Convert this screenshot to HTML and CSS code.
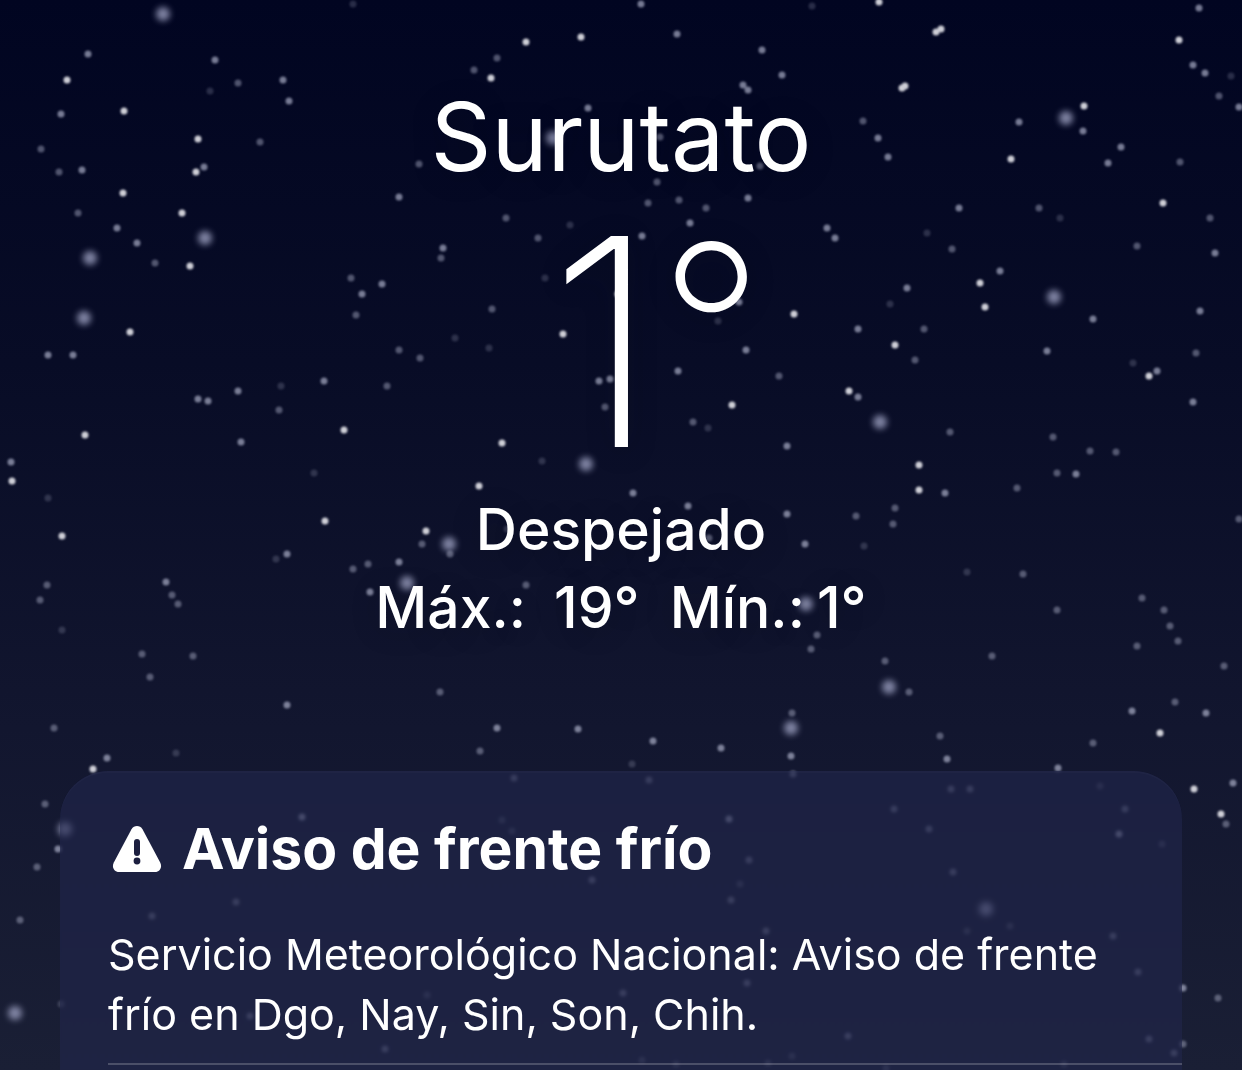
FILE: index.html
```
<!DOCTYPE html>
<html lang="es">
<head>
  <meta charset="UTF-8" />
  <meta name="viewport" content="width=device-width, initial-scale=1.0" />
  <title>Surutato</title>
  <link rel="stylesheet" href="styles.css">
</head>
<body>
  <!-- Cielo estrellado: cada "h0" es una estrella -->
  <svg class="sky" viewBox="0 0 1242 1070" preserveAspectRatio="xMidYMin slice" aria-hidden="true">
    <path class="star glow" d="M163 14h0M205 238h0M90 258h0M84 318h0M553 138h0M1066 118h0M1054 297h0M407 583h0M586 464h0M449 544h0M806 604h0M880 422h0M889 687h0M65 829h0M15 1013h0M791 728h0M986 909h0" />
    <path class="star bright" d="M67 80h0M124 111h0M198 139h0M196 172h0M123 193h0M182 213h0M190 266h0M130 332h0M526 42h0M581 37h0M491 78h0M563 334h0M794 314h0M618 294h0M879 2h0M936 32h0M941 29h0M902 88h0M905 86h0M1084 106h0M1179 40h0M1011 159h0M980 283h0M985 307h0M895 345h0M1163 203h0M344 430h0M12 481h0M62 536h0M325 521h0M85 435h0M732 405h0M502 443h0M479 486h0M426 531h0M849 391h0M919 465h0M919 490h0M1149 376h0M93 769h0M1194 789h0M1221 814h0M1160 733h0" />
    <path class="star medium" d="M88 54h0M215 60h0M283 80h0M289 101h0M61 114h0M204 167h0M137 243h0M362 294h0M399 197h0M48 355h0M73 355h0M82 170h0M382 284h0M117 228h0M641 4h0M677 34h0M762 50h0M782 75h0M743 85h0M748 90h0M588 108h0M748 198h0M642 236h0M443 248h0M690 223h0M746 350h0M827 228h0M739 302h0M1199 8h0M1193 65h0M1205 73h0M878 138h0M888 157h0M1019 122h0M1083 131h0M1121 147h0M1108 163h0M959 208h0M1000 271h0M1215 253h0M1093 319h0M1047 351h0M1200 311h0M907 288h0M858 329h0M1239 107h0M835 238h0M198 399h0M208 401h0M238 391h0M241 442h0M11 462h0M399 562h0M324 381h0M287 554h0M370 592h0M287 705h0M166 582h0M610 379h0M599 381h0M678 371h0M787 446h0M787 514h0M805 544h0M688 506h0M633 493h0M858 397h0M1157 371h0M1193 402h0M1076 474h0M945 493h0M1132 711h0M1206 713h0M107 758h0M58 849h0M302 817h0M497 728h0M578 729h0M721 748h0M653 741h0M791 756h0M729 819h0M1233 783h0M1183 988h0M1119 834h0M1058 768h0M947 759h0" />
    <path class="star dim" d="M59 172h0M78 213h0M155 263h0M351 278h0M356 315h0M399 350h0M260 142h0M41 149h0M238 83h0M474 70h0M497 58h0M660 137h0M657 182h0M648 203h0M679 200h0M706 208h0M506 218h0M538 238h0M441 258h0M492 309h0M420 358h0M419 164h0M760 166h0M863 121h0M1180 162h0M1039 208h0M1210 218h0M1137 246h0M952 249h0M924 329h0M915 360h0M1196 353h0M1219 96h0M387 386h0M279 410h0M47 585h0M40 600h0M172 595h0M178 604h0M142 654h0M193 656h0M150 677h0M368 564h0M353 569h0M605 407h0M779 376h0M693 422h0M422 544h0M450 554h0M526 585h0M440 692h0M817 635h0M811 649h0M792 713h0M709 538h0M950 432h0M1053 437h0M1090 451h0M1116 452h0M1057 473h0M1017 488h0M1239 519h0M895 508h0M856 516h0M893 524h0M1023 574h0M1057 610h0M1142 598h0M1164 610h0M1170 626h0M1178 641h0M1137 646h0M885 661h0M992 656h0M909 692h0M1175 702h0M1224 666h0M54 728h0M45 804h0M37 867h0M20 920h0M236 902h0M152 916h0M385 1049h0M250 1016h0M480 751h0M793 774h0M649 780h0M514 778h0M592 880h0M749 860h0M731 900h0M747 983h0M766 931h0M623 993h0M940 736h0M1093 743h0M894 809h0M929 829h0M970 789h0M951 789h0M1226 824h0M1218 998h0M953 872h0M1113 936h0M1138 972h0M848 1036h0M1174 1053h0M1149 1039h0M1183 1044h0M1125 809h0" />
    <path class="star faint" d="M353 4h0M210 91h0M812 6h0M570 225h0M545 278h0M718 321h0M455 338h0M489 348h0M1231 76h0M1060 218h0M927 233h0M890 304h0M281 386h0M314 473h0M48 498h0M276 559h0M62 630h0M708 428h0M542 461h0M507 529h0M1133 363h0M864 546h0M967 572h0M176 753h0M61 1004h0M377 837h0M632 764h0M502 820h0M512 831h0M740 884h0M642 1060h0M676 1064h0M792 1056h0M768 1063h0M427 995h0M1010 926h0M1100 786h0M1162 844h0M967 931h0M1064 1064h0M886 1068h0" />
  </svg>

  <main class="weather">
    <header class="summary">
      <h1 class="city">Surutato</h1>
      <div class="temperature">1<span class="degree">°</span></div>
      <div class="condition">Despejado</div>
      <div class="range">
        <span class="range-item high"><span>Máx.:</span> <span>19°</span></span>
        <span class="range-item low"><span>Mín.:</span> <span>1°</span></span>
      </div>
    </header>

    <section class="alert">
      <h2 class="alert-title">
        <svg class="alert-icon" viewBox="0 0 50 46" aria-hidden="true">
          <path class="triangle" d="M19.5 3.3C22 -1.1 28 -1.1 30.500 3.300L48.200 36.500C50.500 41 48 46 43 46H7C2 46 -.5 41 1.800 36.500Z" />
          <path class="mark" d="M25 16V27" />
          <circle class="dot" cx="25" cy="35" r="3.400" />
        </svg>
        Aviso de frente frío
      </h2>
      <p class="alert-text">Servicio Meteorológico Nacional: Aviso de frente frío en Dgo, Nay, Sin, Son, Chih.</p>
      <hr class="divider">
    </section>
  </main>
</body>
</html>
```
FILE: styles.css
```
* {
  box-sizing: border-box;
}

body {
  margin: 0;
  background: #1a1f35;
  color: white;
  font-family: Inter, "Liberation Sans", sans-serif;
}

.sky {
  position: absolute;
  top: 0;
  left: 0;
  width: 100%;
  height: 100%;
}

.star {
  fill: none;
  stroke: #c4c8e0;
  stroke-width: 7px;
  stroke-linecap: round;
  filter: blur(1px);
}

.star.glow {
  stroke: #8c90b0;
  stroke-width: 14px;
  opacity: 0.9;
  filter: blur(3px);
}

.star.bright {
  stroke: #e4e4ea;
  opacity: 0.9;
}

.star.medium {
  opacity: 0.6;
}

.star.dim {
  opacity: 0.4;
}

.star.faint {
  opacity: 0.2;
}

.weather {
  display: flex;
  flex-direction: column;
  min-height: 100vh;
  background: linear-gradient(#010521, #080c26 34%, #12162f 68%, #1a1f35);
}

.summary {
  position: relative;
  padding-top: 77px;
  text-align: center;
  text-shadow: 0 4px 30px rgba(20, 20, 25, 0.2);
}

.city {
  margin: 0;
  font-size: 95px;
  font-weight: 400;
  line-height: 120px;
}

.temperature {
  margin-bottom: 4px;
  padding-left: 70px;
  font-size: 290px;
  font-weight: 200;
  line-height: 290px;
}

.degree {
  font-size: 232px;
  line-height: 1;
  vertical-align: 35px;
}

.condition,
.range {
  font-size: 57px;
  font-weight: 500;
  line-height: 78px;
}

.range {
  display: flex;
  justify-content: center;
  gap: 30px;
}

.range-item {
  display: flex;
}

.high {
  gap: 28px;
}

.low {
  gap: 12px;
}

.alert {
  position: relative;
  flex: 1;
  margin: 124px 60px 0;
  padding: 39px 0 0 48px;
  border-radius: 48px 48px 0 0;
  background: rgba(34, 38, 76, 0.6);
  box-shadow: inset 0 2px rgba(255, 255, 255, 0.02);
  backdrop-filter: blur(1px);
}

.alert-title {
  display: flex;
  align-items: center;
  gap: 20px;
  margin: 0;
  font-size: 57px;
  font-weight: 700;
  line-height: 78px;
}

.alert-icon {
  width: 50px;
  height: 46px;
  margin-left: 4px;
}

.triangle {
  fill: white;
}

.mark {
  stroke: #1c1f3f;
  stroke-width: 6px;
  stroke-linecap: round;
}

.dot {
  fill: #1c1f3f;
}

.alert-text {
  margin: 36px 48px 0 0;
  font-size: 43px;
  line-height: 60px;
}

.divider {
  height: 2px;
  margin: 19px 0 4px;
  border: none;
  background: rgba(255, 255, 255, 0.2);
}
```
